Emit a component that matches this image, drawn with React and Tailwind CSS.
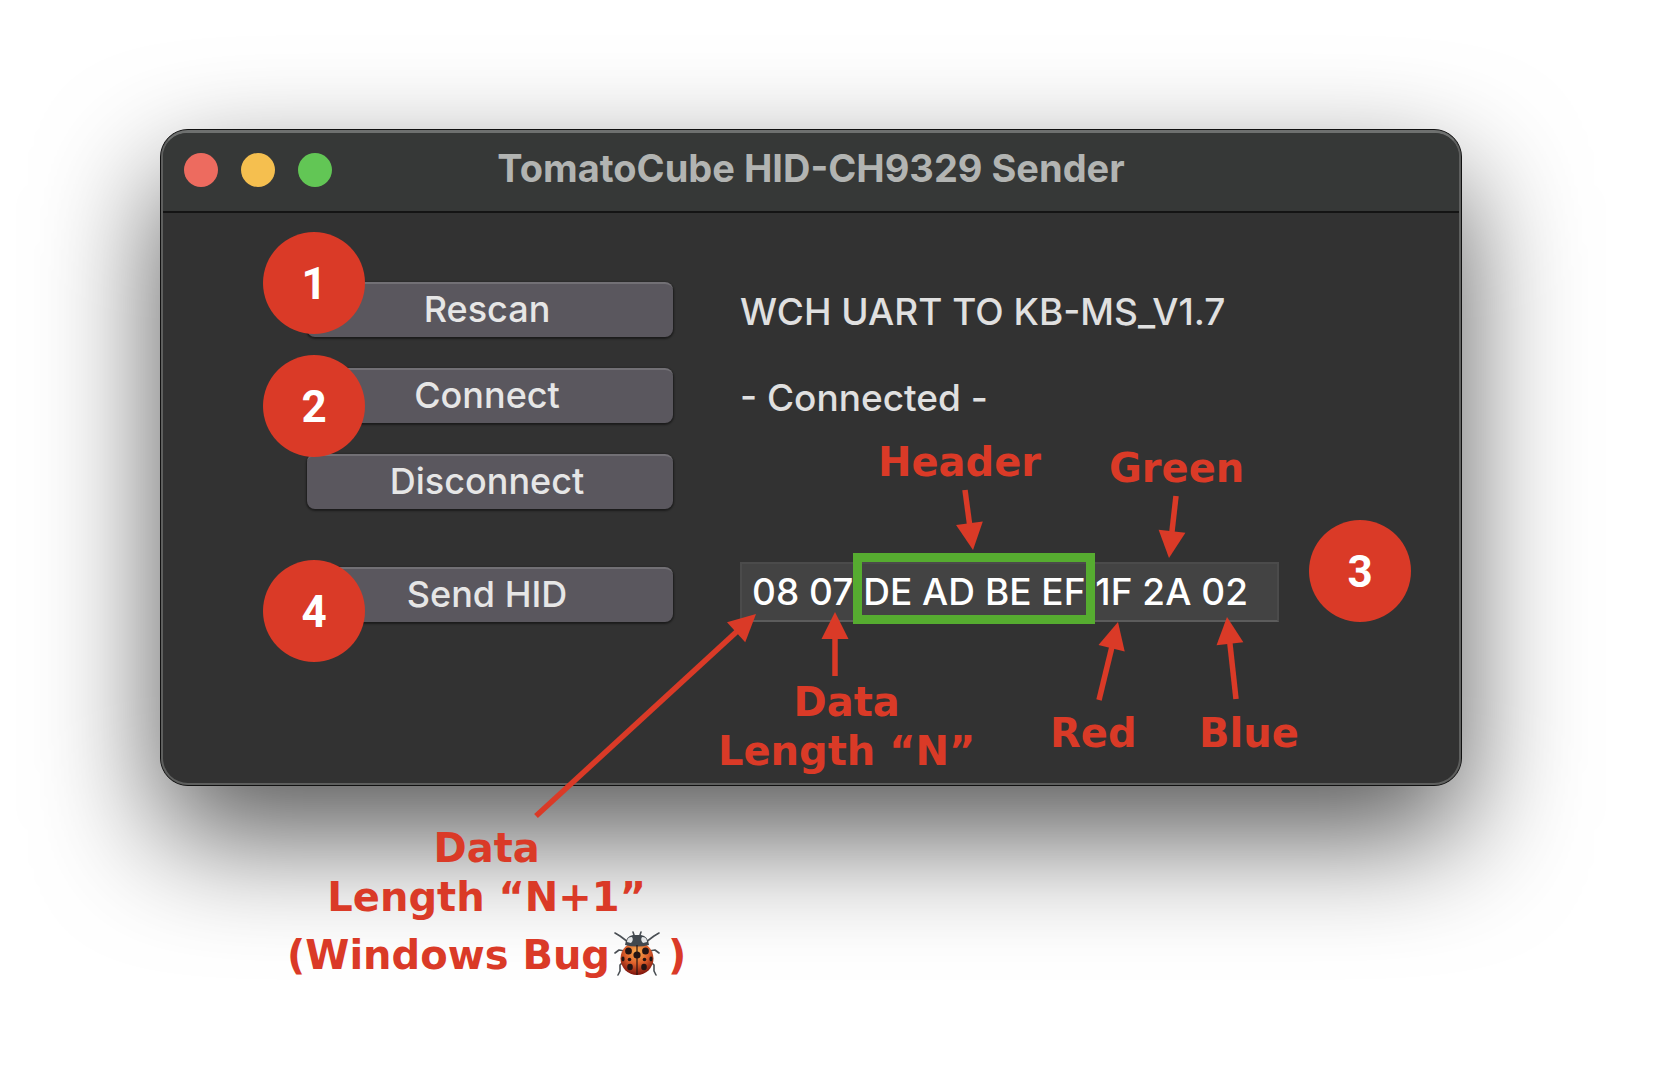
const uiFont = "font-['Inter',sans-serif]";

function StepBadge({ n, className = '' }) {
  return (
    <span
      className={`flex size-[102px] shrink-0 items-center justify-center rounded-full bg-[#da3a27] pt-0.5 font-['Roboto',sans-serif] text-[44px] leading-none font-bold text-white ${className}`}
    >
      {n}
    </span>
  );
}

function ActionButton({ children, badge, badgeClass = '' }) {
  return (
    <div className="relative">
      <button
        type="button"
        className="flex h-[55px] w-full items-center justify-center rounded-lg border-t-2 border-[#727075] bg-[#5a575e] pr-[6px] pb-1 text-[36px] leading-none font-medium text-[#e6e6e6] shadow-[0_1px_2px_1px_rgba(0,0,0,0.45)]"
      >
        {children}
      </button>
      {badge && <StepBadge n={badge} className={`absolute -left-[44px] z-10 ${badgeClass}`} />}
    </div>
  );
}

const arrows = [
  { from: [965, 490], to: [973, 550] },
  { from: [1176, 496], to: [1169, 558] },
  { from: [835, 676], to: [835, 612] },
  { from: [536, 816], to: [756, 614] },
  { from: [1099, 700], to: [1118, 622] },
  { from: [1236, 699], to: [1227, 617] },
];

function Arrow({ from, to }) {
  const [x1, y1] = from;
  const [x2, y2] = to;
  const len = Math.hypot(x2 - x1, y2 - y1);
  const ux = (x2 - x1) / len;
  const uy = (y2 - y1) / len;
  const bx = x2 - ux * 27;
  const by = y2 - uy * 27;
  return (
    <g>
      <line x1={x1} y1={y1} x2={bx + ux} y2={by + uy} stroke="#da3a27" strokeWidth="5.5" />
      <polygon
        fill="#da3a27"
        points={`${x2},${y2} ${bx - uy * 13.5},${by + ux * 13.5} ${bx + uy * 13.5},${by - ux * 13.5}`}
      />
    </g>
  );
}

function Note({ className, children }) {
  return (
    <p
      className={`absolute text-center font-['DejaVu_Sans',sans-serif] text-[40px] leading-[49px] font-bold whitespace-nowrap text-[#da3a27] ${className}`}
    >
      {children}
    </p>
  );
}

function Ladybug() {
  return (
    <svg viewBox="0 0 46 46" className="mr-2 ml-1 inline-block h-[46px] w-[46px] align-[-8px]" aria-hidden="true">
      <defs>
        <radialGradient id="shell" cx="0.5" cy="0.3" r="0.7">
          <stop offset="0" stopColor="#f9b04e" />
          <stop offset="0.5" stopColor="#e0622c" />
          <stop offset="1" stopColor="#7d120c" />
        </radialGradient>
      </defs>
      <g fill="none" stroke="#4a4f54" strokeWidth="1.6" strokeLinecap="round" strokeLinejoin="round">
        <path d="M14 11 L6 5 L1 2 M32 11 L40 5 L45 2" />
        <path d="M11 20 L5 19 L1 22 M35 20 L41 19 L45 22" />
        <path d="M9 31 L6 34 L6 40 L4 44 M37 31 L40 34 L40 40 L42 44" />
        <path d="M20 4 L19 1 M26 4 L27 1" />
      </g>
      <ellipse cx="23" cy="27.500" rx="16.500" ry="16.500" fill="url(#shell)" />
      <path d="M11 14 Q12 5 19 4 L27 4 Q34 5 35 14 Q23 17 11 14 Z" fill="#41484e" />
      <path d="M13 11 Q13 6 18 6 Q20 9 17 12 Z M33 11 Q33 6 28 6 Q26 9 29 12 Z" fill="#e4e6e7" />
      <path d="M23 14 V44" stroke="#2a1512" strokeWidth="1.200" />
      <g fill="#241413">
        <ellipse cx="14.500" cy="20" rx="3.400" ry="3.600" />
        <ellipse cx="31.500" cy="20" rx="3.400" ry="3.600" />
        <circle cx="23" cy="24" r="3.600" />
        <circle cx="15.500" cy="28.500" r="1.800" />
        <circle cx="30.500" cy="28.500" r="1.800" />
        <ellipse cx="9" cy="28" rx="1.600" ry="2.400" />
        <ellipse cx="37" cy="28" rx="1.600" ry="2.400" />
        <ellipse cx="16" cy="36" rx="2.800" ry="3.200" />
        <ellipse cx="30" cy="36" rx="2.800" ry="3.200" />
      </g>
    </svg>
  );
}

export default function App() {
  return (
    <main className={`relative min-h-screen bg-white pt-[129px] pr-[194px] pb-[60px] pl-[160px] ${uiFont}`}>
      <section className="rounded-[28px] border border-[#111] bg-[#323232] shadow-[0_50px_120px_rgba(0,0,0,0.66)]">
        <div className="rounded-[27px] border-2 border-t-[3px] border-[#5e5f5e] border-t-[#6e706f]">
          <header className="grid h-[80px] grid-cols-[1fr_auto_1fr] items-center rounded-t-[24px] border-b-2 border-[#141414] bg-[#363837] px-[21px] pb-1">
            <div className="flex gap-[23px]">
              <button type="button" aria-label="Close" className="size-[34px] rounded-full bg-[#ed6b5f]" />
              <button type="button" aria-label="Minimize" className="size-[34px] rounded-full bg-[#f5bf4f]" />
              <button type="button" aria-label="Zoom" className="size-[34px] rounded-full bg-[#62c655]" />
            </div>
            <h1 className="pb-1 text-[38px] leading-[44px] font-bold text-[#b2b4b2]">TomatoCube HID-CH9329 Sender</h1>
            <div />
          </header>

          <div className="grid grid-cols-[366px_1fr] gap-x-[67px] pt-[69px] pb-[161px] pl-[144px]">
            <div className="flex flex-col gap-[31px]">
              <ActionButton badge="1" badgeClass="-top-[50px]">Rescan</ActionButton>
              <ActionButton badge="2" badgeClass="-top-[13px]">Connect</ActionButton>
              <ActionButton>Disconnect</ActionButton>
            </div>
            <div className="flex flex-col gap-[31px] pt-0.5 text-[37px] leading-[55px] font-medium text-[#e0e0e0]">
              <p>WCH UART TO KB-MS_V1.7</p>
              <p>- Connected -</p>
            </div>

            <div className="mt-[58px]">
              <ActionButton badge="4" badgeClass="-top-[7px]">Send HID</ActionButton>
            </div>
            <div className="mt-[53px] flex items-center gap-[30px]">
              <div className="relative w-[539px]">
                <input
                  type="text"
                  aria-label="HID data bytes"
                  defaultValue="08 07 DE AD BE EF 1F 2A 02"
                  className="block h-[60px] w-full border-2 border-[#4b4b4b] border-b-[#5c5c5c] bg-[#434343] px-2.5 pb-0.5 text-[37px] font-medium text-white outline-none"
                />
                <div className="pointer-events-none absolute -top-[9px] left-[113px] h-[71px] w-[242px] border-[9px] border-[#56ac30]" />
              </div>
              <StepBadge n="3" className="-mt-[53px] -mb-[10px]" />
            </div>
          </div>
        </div>
      </section>

      <svg className="pointer-events-none absolute inset-0 h-full w-full" aria-hidden="true">
        {arrows.map((a) => (
          <Arrow key={a.from.join()} {...a} />
        ))}
      </svg>
      <Note className="top-[438px] left-[878px]">Header</Note>
      <Note className="top-[444px] left-[1109px]">Green</Note>
      <Note className="top-[678px] left-[718px]">
        Data
        <br />
        Length “N”
      </Note>
      <Note className="top-[709px] left-[1050px]">Red</Note>
      <Note className="top-[709px] left-[1199px]">Blue</Note>
      <Note className="top-[824px] left-[287px]">
        Data
        <br />
        Length “N+1”
        <span className="mt-[9px] block">
          (Windows Bug
          <Ladybug />)
        </span>
      </Note>
    </main>
  );
}
